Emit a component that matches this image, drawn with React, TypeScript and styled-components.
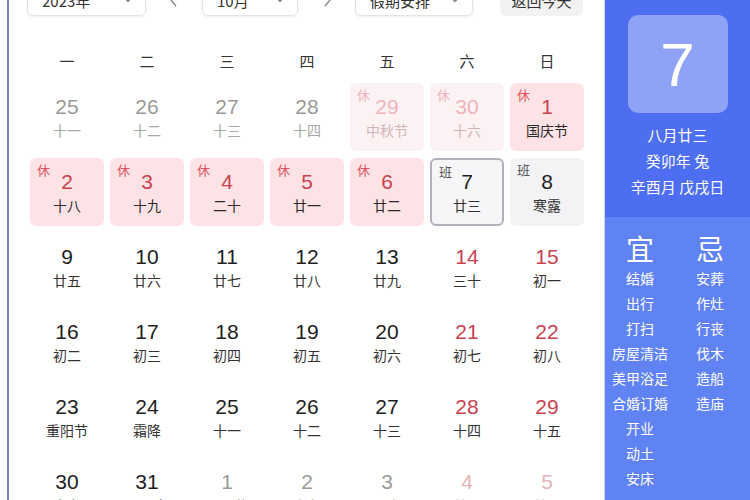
import React from "react";
import styled, { createGlobalStyle, css } from "styled-components";

const Global = createGlobalStyle`
  html, body { margin: 0; padding: 0; background: #fff; }
  body { font-family: "Liberation Sans", "Noto Sans CJK SC", sans-serif; }
`;

const Page = styled.div`
  width: 750px;
  height: 500px;
  overflow: hidden;
  display: flex;
  background: #fff;
`;

const Main = styled.div`
  margin-left: 7px;
  border-left: 2px solid #7482d8;
  width: 596px;
  flex-shrink: 0;
  padding: 0 0 0 21px;
  box-sizing: border-box;
  display: flex;
  flex-direction: column;
  & > * { flex-shrink: 0; }
`;

const Toolbar = styled.div`
  margin-top: -16px;
  height: 32px;
  display: flex;
  align-items: stretch;
  margin-left: -3px;
`;

const Select = styled.div<{ $w: number }>`
  width: ${(p) => p.$w}px;
  box-sizing: border-box;
  border: 1px solid #e4e4e4;
  border-radius: 6px;
  box-shadow: 0 1px 3px rgba(0, 0, 0, 0.08);
  display: flex;
  align-items: center;
  justify-content: space-between;
  padding: 0 12px 0 14px;
  font-family: "Noto Sans CJK SC", sans-serif;
  font-size: 15px;
  color: #333;
`;

const Arrow = styled.div<{ $w: number }>`
  width: ${(p) => p.$w}px;
  display: flex;
  align-items: center;
  justify-content: center;
  color: #888;
`;

const TodayBtn = styled.div`
  margin-left: 27px;
  width: 83px;
  border-radius: 6px;
  background: #f2f2f3;
  display: flex;
  align-items: center;
  justify-content: center;
  font-family: "Noto Sans CJK SC", sans-serif;
  font-size: 15px;
  color: #333;
`;

const WeekRow = styled.div`
  margin-top: 24px;
  height: 40px;
  display: grid;
  grid-template-columns: repeat(7, 74px);
  column-gap: 6px;
  align-items: center;
  justify-items: center;
  font-family: "Noto Sans CJK SC", sans-serif;
  font-size: 15px;
  color: #333;
`;

const Grid = styled.div`
  margin-top: 3px;
  display: grid;
  grid-template-columns: repeat(7, 74px);
  grid-auto-rows: 68px;
  column-gap: 6px;
  row-gap: 7px;
`;

type Kind = "normal" | "other" | "holiday" | "holidayFaded" | "today" | "work";

const Cell = styled.div<{ $kind: Kind }>`
  position: relative;
  box-sizing: border-box;
  border-radius: 6px;
  display: flex;
  flex-direction: column;
  align-items: center;
  justify-content: center;
  gap: 2px;
  ${(p) =>
    p.$kind === "holiday" &&
    css`
      background: #fde3e6;
    `}
  ${(p) =>
    p.$kind === "holidayFaded" &&
    css`
      background: #fdf2f3;
    `}
  ${(p) =>
    p.$kind === "today" &&
    css`
      background: #f6f6f8;
      border: 2px solid #aeb2ba;
    `}
  ${(p) =>
    p.$kind === "work" &&
    css`
      background: #f3f3f5;
    `}
`;

const Num = styled.div<{ $color: string }>`
  font-family: "Liberation Sans", Arial, sans-serif;
  font-size: 21px;
  line-height: 24px;
  color: ${(p) => p.$color};
`;

const Lunar = styled.div<{ $color: string }>`
  font-family: "Noto Sans CJK SC", sans-serif;
  font-size: 14px;
  line-height: 18px;
  color: ${(p) => p.$color};
`;

const Tag = styled.div<{ $color: string }>`
  position: absolute;
  top: 5px;
  left: 7px;
  font-family: "Noto Sans CJK SC", sans-serif;
  font-size: 13px;
  line-height: 14px;
  color: ${(p) => p.$color};
`;

const Side = styled.div`
  margin-left: auto;
  width: 145px;
  display: flex;
  flex-direction: column;
  color: #fff;
  font-family: "Noto Sans CJK SC", sans-serif;
  border-left: 1px solid #c9d3fa;
`;

const SideTop = styled.div`
  height: 217px;
  flex-shrink: 0;
  background: #4d6ef1;
  display: flex;
  flex-direction: column;
  align-items: center;
  padding-top: 15px;
  box-sizing: border-box;
`;

const DateBox = styled.div`
  width: 100px;
  height: 98px;
  border-radius: 10px;
  background: #8ea2f6;
  display: flex;
  align-items: center;
  justify-content: center;
  font-family: "Liberation Sans", Arial, sans-serif;
  font-size: 62px;
  color: #fff;
  margin-bottom: 9px;
`;

const InfoLine = styled.div`
  font-size: 15px;
  line-height: 26px;
  white-space: nowrap;
`;

const SideBottom = styled.div`
  flex: 1;
  background: #6083f3;
  display: grid;
  grid-template-columns: 70px 70px;
  align-content: start;
  padding-top: 13px;
`;

const Col = styled.div`
  display: flex;
  flex-direction: column;
  align-items: center;
`;

const Head = styled.div`
  font-size: 28px;
  line-height: 36px;
`;

const Item = styled.div`
  font-size: 14px;
  line-height: 25px;
  white-space: nowrap;
`;

const Chevron = () => (
  <svg width="10" height="10" viewBox="0 0 10 10">
    <path d="M2 3.5 L5 6.5 L8 3.5" fill="none" stroke="#888" strokeWidth="1.4" />
  </svg>
);

const ArrowIcon = ({ dir }: { dir: "l" | "r" }) => (
  <svg width="12" height="16" viewBox="0 0 12 16">
    <path
      d={dir === "l" ? "M8 2 L3 8 L8 14" : "M4 2 L9 8 L4 14"}
      fill="none"
      stroke="#888"
      strokeWidth="1.4"
    />
  </svg>
);

type Day = { n: number; l: string; kind: Kind; weekend?: boolean; tag?: string };

const RED = "#c9424e";

const days: Day[] = [
  { n: 25, l: "十一", kind: "other" },
  { n: 26, l: "十二", kind: "other" },
  { n: 27, l: "十三", kind: "other" },
  { n: 28, l: "十四", kind: "other" },
  { n: 29, l: "中秋节", kind: "holidayFaded", tag: "休" },
  { n: 30, l: "十六", kind: "holidayFaded", tag: "休" },
  { n: 1, l: "国庆节", kind: "holiday", tag: "休" },
  { n: 2, l: "十八", kind: "holiday", tag: "休" },
  { n: 3, l: "十九", kind: "holiday", tag: "休" },
  { n: 4, l: "二十", kind: "holiday", tag: "休" },
  { n: 5, l: "廿一", kind: "holiday", tag: "休" },
  { n: 6, l: "廿二", kind: "holiday", tag: "休" },
  { n: 7, l: "廿三", kind: "today", tag: "班" },
  { n: 8, l: "寒露", kind: "work", tag: "班" },
  { n: 9, l: "廿五", kind: "normal" },
  { n: 10, l: "廿六", kind: "normal" },
  { n: 11, l: "廿七", kind: "normal" },
  { n: 12, l: "廿八", kind: "normal" },
  { n: 13, l: "廿九", kind: "normal" },
  { n: 14, l: "三十", kind: "normal", weekend: true },
  { n: 15, l: "初一", kind: "normal", weekend: true },
  { n: 16, l: "初二", kind: "normal" },
  { n: 17, l: "初三", kind: "normal" },
  { n: 18, l: "初四", kind: "normal" },
  { n: 19, l: "初五", kind: "normal" },
  { n: 20, l: "初六", kind: "normal" },
  { n: 21, l: "初七", kind: "normal", weekend: true },
  { n: 22, l: "初八", kind: "normal", weekend: true },
  { n: 23, l: "重阳节", kind: "normal" },
  { n: 24, l: "霜降", kind: "normal" },
  { n: 25, l: "十一", kind: "normal" },
  { n: 26, l: "十二", kind: "normal" },
  { n: 27, l: "十三", kind: "normal" },
  { n: 28, l: "十四", kind: "normal", weekend: true },
  { n: 29, l: "十五", kind: "normal", weekend: true },
  { n: 30, l: "十六", kind: "normal" },
  { n: 31, l: "万圣夜", kind: "normal" },
  { n: 1, l: "万圣节", kind: "other" },
  { n: 2, l: "十九", kind: "other" },
  { n: 3, l: "二十", kind: "other" },
  { n: 4, l: "廿一", kind: "other", weekend: true },
  { n: 5, l: "廿二", kind: "other", weekend: true },
];

function colors(d: Day) {
  switch (d.kind) {
    case "other":
      return d.weekend
        ? { num: "#e6b3b8", lunar: "#c8c8c8", tag: "" }
        : { num: "#9a9a9a", lunar: "#a8a8a8", tag: "" };
    case "holidayFaded":
      return { num: "#efb3b9", lunar: "#d2b4b7", tag: "#efb3b9" };
    case "holiday":
      return { num: RED, lunar: "#2a2a2a", tag: "#e0505b" };
    case "today":
    case "work":
      return { num: "#1e1e1e", lunar: "#333", tag: "#555" };
    default:
      return d.weekend
        ? { num: RED, lunar: "#333", tag: "" }
        : { num: "#1e1e1e", lunar: "#333", tag: "" };
  }
}

const yi = ["结婚", "出行", "打扫", "房屋清洁", "美甲浴足", "合婚订婚", "开业", "动土", "安床"];
const ji = ["安葬", "作灶", "行丧", "伐木", "造船", "造庙"];

export default function App() {
  return (
    <Page>
      <Global />
      <Main>
        <Toolbar>
          <Select $w={119}>
            <span>2023年</span>
            <Chevron />
          </Select>
          <Arrow $w={56}>
            <ArrowIcon dir="l" />
          </Arrow>
          <Select $w={96}>
            <span>10月</span>
            <Chevron />
          </Select>
          <Arrow $w={57}>
            <ArrowIcon dir="r" />
          </Arrow>
          <Select $w={118}>
            <span>假期安排</span>
            <Chevron />
          </Select>
          <TodayBtn>返回今天</TodayBtn>
        </Toolbar>
        <WeekRow>
          {["一", "二", "三", "四", "五", "六", "日"].map((w) => (
            <div key={w}>{w}</div>
          ))}
        </WeekRow>
        <Grid>
          {days.map((d, i) => {
            const c = colors(d);
            return (
              <Cell key={i} $kind={d.kind}>
                {d.tag && <Tag $color={c.tag}>{d.tag}</Tag>}
                <Num $color={c.num}>{d.n}</Num>
                <Lunar $color={c.lunar}>{d.l}</Lunar>
              </Cell>
            );
          })}
        </Grid>
      </Main>
      <Side>
        <SideTop>
          <DateBox>7</DateBox>
          <InfoLine>八月廿三</InfoLine>
          <InfoLine>癸卯年 兔</InfoLine>
          <InfoLine>辛酉月 戊戌日</InfoLine>
        </SideTop>
        <SideBottom>
          <Col>
            <Head>宜</Head>
            {yi.map((t) => (
              <Item key={t}>{t}</Item>
            ))}
          </Col>
          <Col>
            <Head>忌</Head>
            {ji.map((t) => (
              <Item key={t}>{t}</Item>
            ))}
          </Col>
        </SideBottom>
      </Side>
    </Page>
  );
}
